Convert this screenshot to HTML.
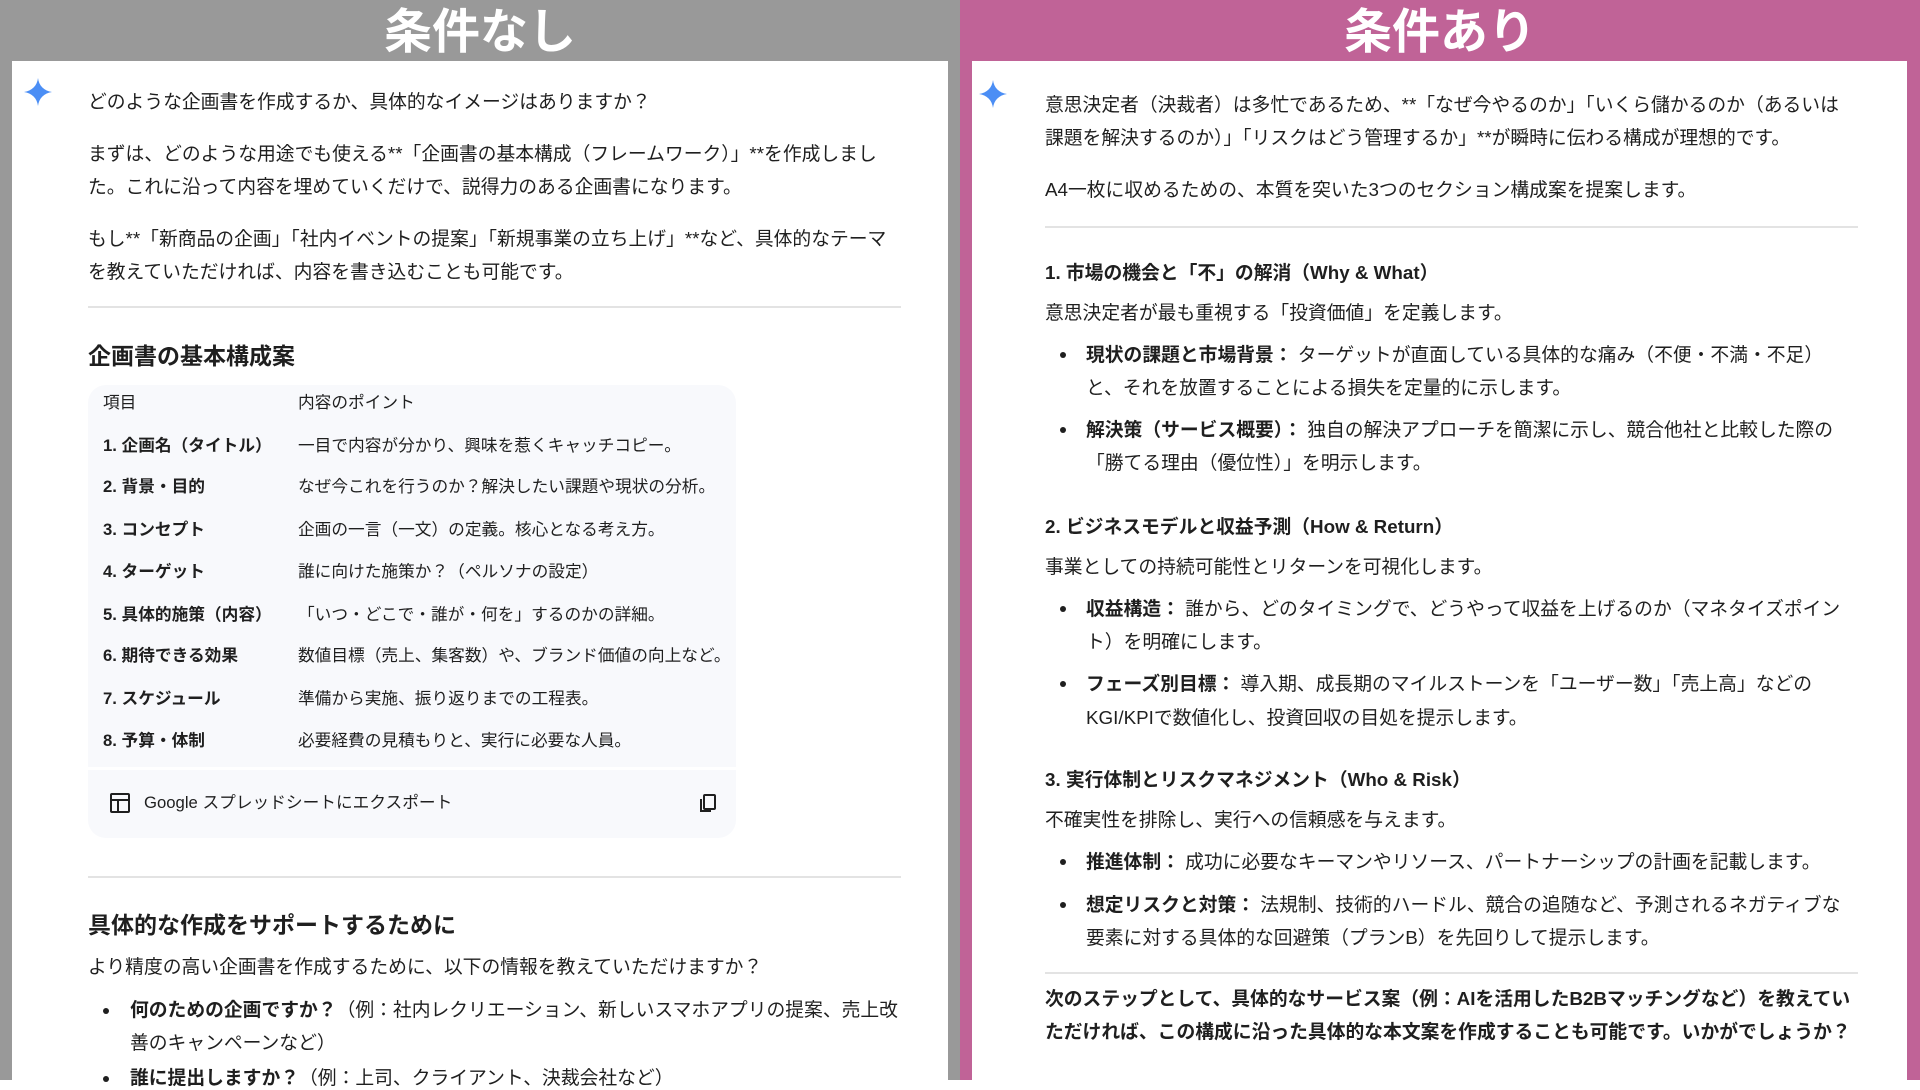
<!DOCTYPE html>
<html><head><meta charset="utf-8"><style>
*{margin:0;padding:0;box-sizing:border-box}
body{width:1920px;height:1080px;overflow:hidden;position:relative;background:#fff;font-family:"Liberation Sans","Noto Sans CJK JP",sans-serif;color:#1f1f1f;font-size:18.8px}
.a{position:absolute;white-space:nowrap;line-height:24px}
.b{font-weight:bold}
.h{font-size:23px;font-weight:bold;line-height:30px}
.t{font-size:16.7px}
.hr{position:absolute;height:2px;background:#e3e3e3}
.dot{position:absolute;width:6px;height:6px;border-radius:50%;background:#1f1f1f}
.ttl{position:absolute;top:2px;height:61px;line-height:61px;color:#fff;font-size:48px;font-weight:bold;text-align:center}
</style></head><body>
<div style="position:absolute;left:0;top:0;width:960px;height:1080px;background:#999"></div>
<div style="position:absolute;left:960px;top:0;width:960px;height:1080px;background:#c06397"></div>
<div style="position:absolute;left:12px;top:61px;width:936px;height:1019px;background:#fff"></div>
<div style="position:absolute;left:972px;top:61px;width:935px;height:1019px;background:#fff"></div>
<div class="ttl" style="left:0;width:960px">条件なし</div>
<div class="ttl" style="left:960px;width:960px">条件あり</div>

<svg style="position:absolute;left:24px;top:78px" width="28" height="28" viewBox="0 0 24 24"><path d="M12 0C12.8 6.5 17 11 24 12C17 13 12.8 17.5 12 24C11.2 17.5 7 13 0 12C7 11 11.2 6.5 12 0Z" fill="#4b8ef5"/></svg>
<svg style="position:absolute;left:979px;top:80px" width="28" height="28" viewBox="0 0 24 24"><path d="M12 0C12.8 6.5 17 11 24 12C17 13 12.8 17.5 12 24C11.2 17.5 7 13 0 12C7 11 11.2 6.5 12 0Z" fill="#4b8ef5"/></svg>

<!-- left -->
<div class="a" style="left:88px;top:90px">どのような企画書を作成するか、具体的なイメージはありますか？</div>
<div class="a" style="left:88px;top:142px">まずは、どのような用途でも使える**「企画書の基本構成（フレームワーク）」**を作成しまし</div>
<div class="a" style="left:88px;top:175px">た。これに沿って内容を埋めていくだけで、説得力のある企画書になります。</div>
<div class="a" style="left:88px;top:227px">もし**「新商品の企画」「社内イベントの提案」「新規事業の立ち上げ」**など、具体的なテーマ</div>
<div class="a" style="left:88px;top:260px">を教えていただければ、内容を書き込むことも可能です。</div>
<div class="hr" style="left:88px;top:306px;width:813px"></div>
<div class="a h" style="left:88px;top:341px">企画書の基本構成案</div>
<div style="position:absolute;left:88px;top:385px;width:648px;height:453px;background:#f8f9fc;border-radius:18px"></div>
<div style="position:absolute;left:88px;top:767px;width:648px;height:3px;background:#fff"></div>
<div class="a t" style="left:103px;top:391px">項目</div><div class="a t" style="left:298px;top:391px">内容のポイント</div>
<div class="a t b" style="left:103px;top:434px">1. 企画名（タイトル）</div><div class="a t" style="left:298px;top:434px">一目で内容が分かり、興味を惹くキャッチコピー。</div>
<div class="a t b" style="left:103px;top:475px">2. 背景・目的</div><div class="a t" style="left:298px;top:475px">なぜ今これを行うのか？解決したい課題や現状の分析。</div>
<div class="a t b" style="left:103px;top:518px">3. コンセプト</div><div class="a t" style="left:298px;top:518px">企画の一言（一文）の定義。核心となる考え方。</div>
<div class="a t b" style="left:103px;top:560px">4. ターゲット</div><div class="a t" style="left:298px;top:560px">誰に向けた施策か？（ペルソナの設定）</div>
<div class="a t b" style="left:103px;top:603px">5. 具体的施策（内容）</div><div class="a t" style="left:298px;top:603px">「いつ・どこで・誰が・何を」するのかの詳細。</div>
<div class="a t b" style="left:103px;top:644px">6. 期待できる効果</div><div class="a t" style="left:298px;top:644px">数値目標（売上、集客数）や、ブランド価値の向上など。</div>
<div class="a t b" style="left:103px;top:687px">7. スケジュール</div><div class="a t" style="left:298px;top:687px">準備から実施、振り返りまでの工程表。</div>
<div class="a t b" style="left:103px;top:729px">8. 予算・体制</div><div class="a t" style="left:298px;top:729px">必要経費の見積もりと、実行に必要な人員。</div>
<svg style="position:absolute;left:109px;top:792px" width="22" height="22" viewBox="0 0 22 22" fill="none" stroke="#1f1f1f" stroke-width="2"><rect x="2" y="2" width="18" height="18" rx="1"/><path d="M2 8H20M9 8V20"/></svg>
<div class="a t" style="left:144px;top:791px">Google スプレッドシートにエクスポート</div>
<svg style="position:absolute;left:697px;top:792px" width="22" height="22" viewBox="0 0 22 22" fill="none" stroke="#1f1f1f" stroke-width="2"><rect x="7" y="3" width="11" height="14" rx="1"/><path d="M4 7V19H14"/></svg>
<div class="hr" style="left:88px;top:876px;width:813px"></div>
<div class="a h" style="left:88px;top:910px">具体的な作成をサポートするために</div>
<div class="a" style="left:88px;top:955px">より精度の高い企画書を作成するために、以下の情報を教えていただけますか？</div>
<div class="dot" style="left:103px;top:1008px"></div>
<div class="a" style="left:130px;top:998px"><b>何のための企画ですか？</b>（例：社内レクリエーション、新しいスマホアプリの提案、売上改</div>
<div class="a" style="left:130px;top:1031px">善のキャンペーンなど）</div>
<div class="dot" style="left:103px;top:1076px"></div>
<div class="a" style="left:130px;top:1066px"><b>誰に提出しますか？</b>（例：上司、クライアント、決裁会社など）</div>

<!-- right -->
<div class="a" style="left:1045px;top:93px">意思決定者（決裁者）は多忙であるため、**「なぜ今やるのか」「いくら儲かるのか（あるいは</div>
<div class="a" style="left:1045px;top:126px">課題を解決するのか）」「リスクはどう管理するか」**が瞬時に伝わる構成が理想的です。</div>
<div class="a" style="left:1045px;top:178px">A4一枚に収めるための、本質を突いた3つのセクション構成案を提案します。</div>
<div class="hr" style="left:1045px;top:226px;width:813px"></div>
<div class="a b" style="left:1045px;top:261px">1. 市場の機会と「不」の解消（Why &amp; What）</div>
<div class="a" style="left:1045px;top:301px">意思決定者が最も重視する「投資価値」を定義します。</div>
<div class="dot" style="left:1060px;top:352px"></div>
<div class="a" style="left:1086px;top:343px"><b>現状の課題と市場背景：</b> ターゲットが直面している具体的な痛み（不便・不満・不足）</div>
<div class="a" style="left:1086px;top:376px">と、それを放置することによる損失を定量的に示します。</div>
<div class="dot" style="left:1060px;top:427px"></div>
<div class="a" style="left:1086px;top:418px"><b>解決策（サービス概要）：</b> 独自の解決アプローチを簡潔に示し、競合他社と比較した際の</div>
<div class="a" style="left:1086px;top:451px">「勝てる理由（優位性）」を明示します。</div>
<div class="a b" style="left:1045px;top:515px">2. ビジネスモデルと収益予測（How &amp; Return）</div>
<div class="a" style="left:1045px;top:555px">事業としての持続可能性とリターンを可視化します。</div>
<div class="dot" style="left:1060px;top:606px"></div>
<div class="a" style="left:1086px;top:597px"><b>収益構造：</b> 誰から、どのタイミングで、どうやって収益を上げるのか（マネタイズポイン</div>
<div class="a" style="left:1086px;top:630px">ト）を明確にします。</div>
<div class="dot" style="left:1060px;top:681px"></div>
<div class="a" style="left:1086px;top:672px"><b>フェーズ別目標：</b> 導入期、成長期のマイルストーンを「ユーザー数」「売上高」などの</div>
<div class="a" style="left:1086px;top:706px">KGI/KPIで数値化し、投資回収の目処を提示します。</div>
<div class="a b" style="left:1045px;top:768px">3. 実行体制とリスクマネジメント（Who &amp; Risk）</div>
<div class="a" style="left:1045px;top:808px">不確実性を排除し、実行への信頼感を与えます。</div>
<div class="dot" style="left:1060px;top:859px"></div>
<div class="a" style="left:1086px;top:850px"><b>推進体制：</b> 成功に必要なキーマンやリソース、パートナーシップの計画を記載します。</div>
<div class="dot" style="left:1060px;top:902px"></div>
<div class="a" style="left:1086px;top:893px"><b>想定リスクと対策：</b> 法規制、技術的ハードル、競合の追随など、予測されるネガティブな</div>
<div class="a" style="left:1086px;top:926px">要素に対する具体的な回避策（プランB）を先回りして提示します。</div>
<div class="hr" style="left:1045px;top:972px;width:813px"></div>
<div class="a b" style="left:1045px;top:987px">次のステップとして、具体的なサービス案（例：AIを活用したB2Bマッチングなど）を教えてい</div>
<div class="a b" style="left:1045px;top:1020px">ただければ、この構成に沿った具体的な本文案を作成することも可能です。いかがでしょうか？</div>
</body></html>
